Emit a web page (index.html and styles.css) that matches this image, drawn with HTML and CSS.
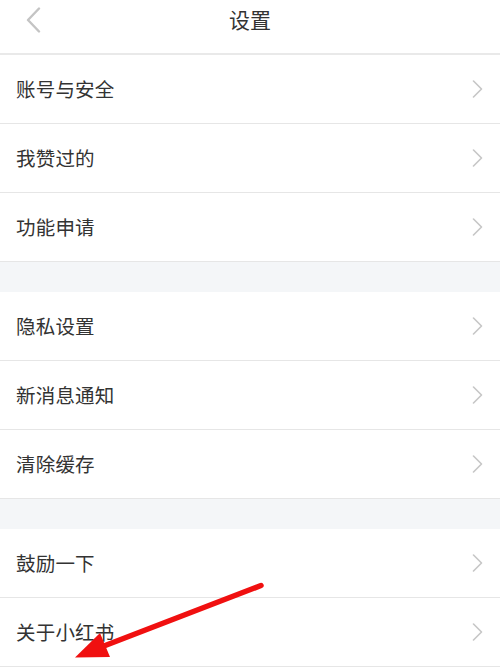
FILE: index.html
```html
<!DOCTYPE html>
<html lang="zh">
<head>
<meta charset="utf-8">
<title>设置</title>
<link rel="stylesheet" href="styles.css">
</head>
<body>
<div class="page">
  <header class="topbar">
    <span class="back">
      <svg width="16" height="26" viewBox="0 0 16 26"><polyline points="14,1.5 3,13 14,24.5" fill="none" stroke="#c4c4c4" stroke-width="2.4" stroke-linecap="round" stroke-linejoin="round"/></svg>
    </span>
    <h1 class="title">设置</h1>
  </header>

  <section class="group">
    <div class="row"><span class="label">账号与安全</span><span class="chev"><svg width="11" height="18" viewBox="0 0 11 18"><polyline points="1.5,1 9.5,9 1.5,17" fill="none" stroke="#c6c6c6" stroke-width="1.6" stroke-linecap="round" stroke-linejoin="round"/></svg></span></div>
    <div class="row"><span class="label">我赞过的</span><span class="chev"><svg width="11" height="18" viewBox="0 0 11 18"><polyline points="1.5,1 9.5,9 1.5,17" fill="none" stroke="#c6c6c6" stroke-width="1.6" stroke-linecap="round" stroke-linejoin="round"/></svg></span></div>
    <div class="row"><span class="label">功能申请</span><span class="chev"><svg width="11" height="18" viewBox="0 0 11 18"><polyline points="1.5,1 9.5,9 1.5,17" fill="none" stroke="#c6c6c6" stroke-width="1.6" stroke-linecap="round" stroke-linejoin="round"/></svg></span></div>
  </section>
  <div class="gap"></div>
  <section class="group">
    <div class="row"><span class="label">隐私设置</span><span class="chev"><svg width="11" height="18" viewBox="0 0 11 18"><polyline points="1.5,1 9.5,9 1.5,17" fill="none" stroke="#c6c6c6" stroke-width="1.6" stroke-linecap="round" stroke-linejoin="round"/></svg></span></div>
    <div class="row"><span class="label">新消息通知</span><span class="chev"><svg width="11" height="18" viewBox="0 0 11 18"><polyline points="1.5,1 9.5,9 1.5,17" fill="none" stroke="#c6c6c6" stroke-width="1.6" stroke-linecap="round" stroke-linejoin="round"/></svg></span></div>
    <div class="row"><span class="label">清除缓存</span><span class="chev"><svg width="11" height="18" viewBox="0 0 11 18"><polyline points="1.5,1 9.5,9 1.5,17" fill="none" stroke="#c6c6c6" stroke-width="1.6" stroke-linecap="round" stroke-linejoin="round"/></svg></span></div>
  </section>
  <div class="gap"></div>
  <section class="group">
    <div class="row"><span class="label">鼓励一下</span><span class="chev"><svg width="11" height="18" viewBox="0 0 11 18"><polyline points="1.5,1 9.5,9 1.5,17" fill="none" stroke="#c6c6c6" stroke-width="1.6" stroke-linecap="round" stroke-linejoin="round"/></svg></span></div>
    <div class="row"><span class="label">关于小红书</span><span class="chev"><svg width="11" height="18" viewBox="0 0 11 18"><polyline points="1.5,1 9.5,9 1.5,17" fill="none" stroke="#c6c6c6" stroke-width="1.6" stroke-linecap="round" stroke-linejoin="round"/></svg></span></div>
  </section>

  <svg class="annot" width="500" height="671" viewBox="0 0 500 671">
    <line x1="261" y1="585.5" x2="100" y2="647.5" stroke="#f01010" stroke-width="5.5" stroke-linecap="round"/>
    <polygon points="75,657.5 100,633 110,657" fill="#f01010"/>
  </svg>
</div>
</body>
</html>
```

FILE: styles.css
```css
html, body {
  margin: 0;
  padding: 0;
  background: #ffffff;
}
body {
  font-family: "Noto Sans CJK SC", "Noto Sans", sans-serif;
  color: #333333;
  width: 500px;
  height: 671px;
  overflow: hidden;
}
.page {
  position: relative;
  width: 500px;
  height: 671px;
}
.topbar {
  position: relative;
  height: 53px;
  border-bottom: 2px solid #e9e9e9;
  display: flex;
  justify-content: center;
  align-items: flex-start;
}
.back {
  position: absolute;
  left: 25px;
  top: 7px;
  display: flex;
}
.title {
  margin: 0;
  padding-top: 3px;
  font-size: 21px;
  line-height: 32px;
  font-weight: 400;
  color: #333333;
}
.group {
  display: flex;
  flex-direction: column;
}
.row {
  height: 68px;
  border-bottom: 1px solid #e6e6e6;
  display: flex;
  align-items: center;
  justify-content: space-between;
  padding: 0 16px 0 16px;
}
.label {
  font-size: 19.5px;
  line-height: 28px;
  color: #333333;
  letter-spacing: 0.2px;
}
.chev {
  display: flex;
  margin-right: 1px;
}
.gap {
  height: 30px;
  background: #f4f6f8;
}
.annot {
  position: absolute;
  left: 0;
  top: 0;
  pointer-events: none;
}
```
